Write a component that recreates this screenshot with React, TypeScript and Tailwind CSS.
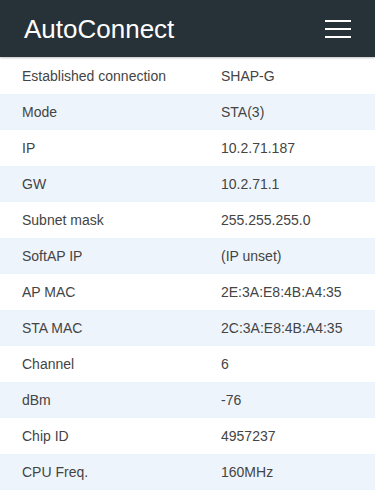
import React from "react";

const rows: [string, string][] = [
  ["Established connection", "SHAP-G"],
  ["Mode", "STA(3)"],
  ["IP", "10.2.71.187"],
  ["GW", "10.2.71.1"],
  ["Subnet mask", "255.255.255.0"],
  ["SoftAP IP", "(IP unset)"],
  ["AP MAC", "2E:3A:E8:4B:A4:35"],
  ["STA MAC", "2C:3A:E8:4B:A4:35"],
  ["Channel", "6"],
  ["dBm", "-76"],
  ["Chip ID", "4957237"],
  ["CPU Freq.", "160MHz"],
];

export default function App() {
  return (
    <div className="w-[375px] h-[490px] overflow-hidden bg-white" style={{ fontFamily: '"Liberation Sans", Arial, sans-serif' }}>
      <header className="relative z-10 h-[57px] bg-[#263238] flex items-center justify-between pl-[24px] pr-[24px] shadow-[0_1px_2px_rgba(0,0,0,0.25)]">
        <h1 className="text-white text-[26px] leading-none font-normal">AutoConnect</h1>
        <div className="flex flex-col gap-[6px] w-[26px]">
          <span className="block h-[2px] bg-white" />
          <span className="block h-[2px] bg-white" />
          <span className="block h-[2px] bg-white" />
        </div>
      </header>
      <div className="pt-[1px]">
        {rows.map(([k, v], i) => (
          <div
            key={k}
            className={`grid grid-cols-[199px_1fr] h-[36px] items-center pl-[22px] text-[14px] text-[#444] ${i % 2 === 1 ? "bg-[#eef4fc]" : "bg-white"}`}
          >
            <span>{k}</span>
            <span>{v}</span>
          </div>
        ))}
      </div>
    </div>
  );
}
